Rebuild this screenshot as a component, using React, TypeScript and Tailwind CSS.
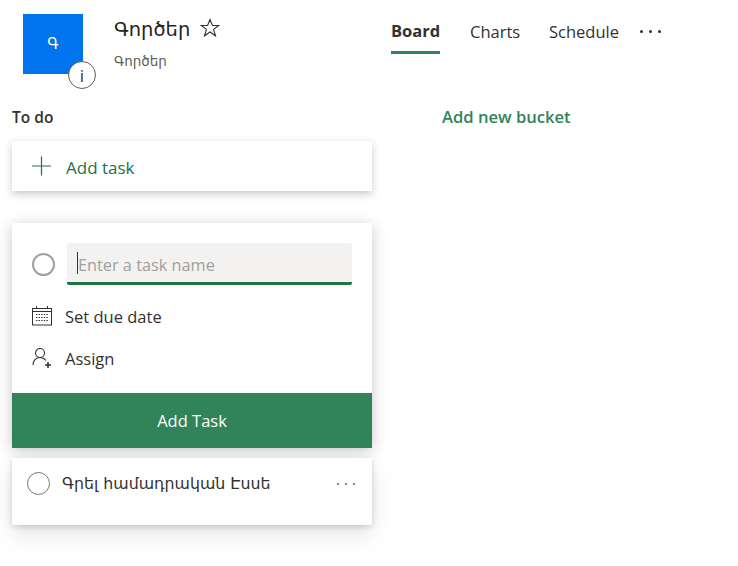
import React from 'react';

const font = "font-['Open_Sans','DejaVu_Sans',sans-serif]";

const Circle: React.FC<{ border: string }> = ({ border }) => (
  <span className={`block w-[23px] h-[23px] shrink-0 rounded-full ${border}`} />
);

const Dots: React.FC<{ color: string; gap: string; size: string }> = ({ color, gap, size }) => (
  <span className={`flex ${gap}`}>
    <span className={`${size} rounded-full ${color}`} />
    <span className={`${size} rounded-full ${color}`} />
    <span className={`${size} rounded-full ${color}`} />
  </span>
);

const CalendarIcon = () => (
  <svg width="20" height="20" viewBox="0 0 20 20" fill="none" stroke="#323130" strokeWidth="1">
    <rect x="0.5" y="2.5" width="19" height="16.5" />
    <path d="M1 5.5h18M4.5 0v3M15.5 0v3" />
    <path d="M4 8.5h12M4 11.5h12M4 14.5h12" strokeDasharray="1.4 1.2" />
  </svg>
);

const AssignIcon = () => (
  <svg width="20" height="20" viewBox="0 0 20 20" fill="none" stroke="#323130" strokeWidth="1.1">
    <circle cx="8" cy="5" r="4.5" />
    <path d="M1 17c0-4.5 3-7.5 7-7.5 2.5 0 4.5 1 5.8 3" />
    <path d="M13 17h6M16 14v6" strokeWidth="1.5" />
  </svg>
);

const App: React.FC = () => {
  return (
    <div className={`w-[738px] h-[566px] overflow-hidden bg-white text-[#323130] ${font}`}>
      <header className="flex pl-[23px] pt-[14px] h-[100px]">
        <div className="relative w-[60px] h-[60px] bg-[#0073ee] flex items-center justify-center text-white text-[15px]">
          <span className="font-['DejaVu_Sans',sans-serif]">Գ</span>
          <span className="absolute left-[45px] top-[47px] w-[28px] h-[28px] rounded-full bg-white border border-[#605e5c] flex items-center justify-center text-[17px] leading-none text-[#323130]">
            i
          </span>
        </div>
        <div className="ml-[31px] w-[130px]">
          <div className="flex items-center h-[32px]">
            <span className="font-['DejaVu_Sans',sans-serif] text-[19.5px] leading-none text-[#252423]">Գործեր</span>
            <svg className="ml-[10px] -mt-[4px]" width="20" height="20" viewBox="0 0 20 20" fill="none" stroke="#323130" strokeWidth="1.1">
              <path d="M10 1.5l2.4 6h6.3l-5.1 3.9 1.9 6.4L10 14l-5.5 3.8 1.9-6.4L1.3 7.5h6.3z" />
            </svg>
          </div>
          <div className="mt-[7px] font-['DejaVu_Sans',sans-serif] text-[13.5px] leading-[16px] text-[#605e5c]">Գործեր</div>
        </div>
        <nav className="ml-[147px] flex items-start text-[16.5px] leading-[36px]">
          <div className="w-[49px] h-[40px] border-b-[3px] border-[#31835a] font-bold text-[16.5px] leading-[34px] whitespace-nowrap">Board</div>
          <div className="ml-[30px] w-[49px] whitespace-nowrap">Charts</div>
          <div className="ml-[30px] w-[70px] whitespace-nowrap">Schedule</div>
          <div className="ml-[21px] h-[34px] flex items-center">
            <Dots color="bg-[#323130]" gap="gap-[6px]" size="w-[3px] h-[3px]" />
          </div>
        </nav>
      </header>

      <main className="flex pl-[12px]">
        <section className="w-[360px]">
          <h2 className="h-[34px] leading-[34px] text-[15.5px] font-semibold">To do</h2>
          <div className="mt-[7px] h-[50px] flex items-center bg-white pl-[20px] shadow-[0_3px_8px_rgba(0,0,0,0.22)]">
            <svg width="20" height="20" viewBox="0 0 20 20" stroke="#217346" strokeWidth="1.2">
              <path d="M0 10h19M9.5 0.5v19" />
            </svg>
            <span className="ml-[14px] pt-[4px] text-[17px] text-[#217346]">Add task</span>
          </div>

          <div className="mt-[32px] bg-white shadow-[0_3px_14px_rgba(0,0,0,0.22)]">
            <div className="h-[170px] px-[20px] pt-[20px]">
              <div className="flex items-center">
                <Circle border="border-2 border-[#a19f9d]" />
                <div className="ml-[12px] flex-1 h-[42px] rounded-[2px] bg-[#f3f2f1] border-b-[3px] border-[#217346] flex items-center pl-[10px]">
                  <span className="w-px h-[22px] bg-[#323130]" />
                  <span className="pt-[5px] text-[16.3px] text-[#a19f9d]">Enter a task name</span>
                </div>
              </div>
              <div className="mt-[19px] flex items-center h-[24px]">
                <CalendarIcon />
                <span className="ml-[13px] pt-[2px] text-[16.5px]">Set due date</span>
              </div>
              <div className="mt-[18px] flex items-center h-[24px]">
                <AssignIcon />
                <span className="ml-[13px] pt-[2px] text-[16.5px]">Assign</span>
              </div>
            </div>
            <div className="h-[55px] pt-[2px] bg-[#31835a] flex items-center justify-center text-white text-[16.5px]">Add Task</div>
          </div>

          <div className="mt-[10px] h-[67px] bg-white pl-[15px] pr-[17px] pt-[14px] shadow-[0_2px_6px_rgba(0,0,0,0.16),0_10px_24px_rgba(0,0,0,0.1)]">
            <div className="flex items-center">
              <Circle border="border-[1.5px] border-[#767676]" />
              <span className="ml-[12px] flex-1 font-['DejaVu_Sans',sans-serif] text-[15.8px] leading-[22px] whitespace-nowrap">Գրել համադրական Էսսե</span>
              <Dots color="bg-[#605e5c]" gap="gap-[6px]" size="w-[2px] h-[2px]" />
            </div>
          </div>
        </section>

        <section className="ml-[70px]">
          <h2 className="h-[34px] leading-[34px] text-[16.6px] font-semibold text-[#31835a]">Add new bucket</h2>
        </section>
      </main>
    </div>
  );
};

export default App;
